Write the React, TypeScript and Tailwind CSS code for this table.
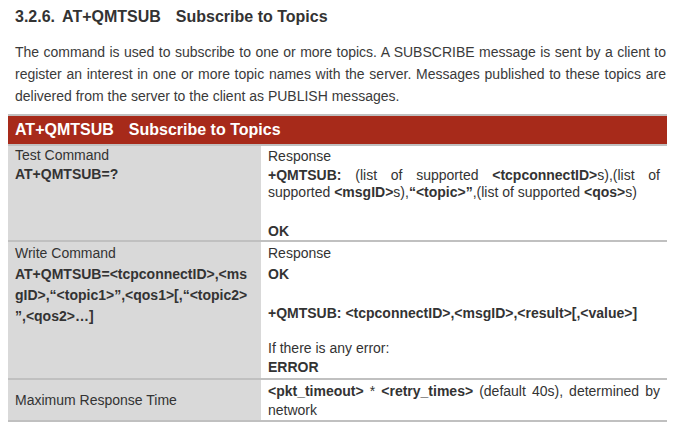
import React from "react";

const font = { fontFamily: '"Liberation Sans", Arial, sans-serif' };

export default function App() {
  return (
    <div className="w-[686px] h-[438px] bg-white text-[#333333] overflow-hidden" style={font}>
      {/* Title */}
      <div className="pt-[7px] pl-[15px] h-[27px] text-[16px] leading-[20px] font-bold text-[#333333] whitespace-nowrap">
        <span>3.2.6.</span>
        <span className="ml-[7px]">AT+QMTSUB</span>
        <span className="ml-[15px]">Subscribe to Topics</span>
      </div>
      {/* Paragraph */}
      <div className="mt-[14px] pl-[15px] pr-[20px] text-[14px] leading-[22px] text-[#3a3a3a]">
        <div className="text-justify [text-align-last:justify] whitespace-nowrap">
          The command is used to subscribe to one or more topics. A SUBSCRIBE message is sent by a client to
        </div>
        <div className="text-justify [text-align-last:justify] whitespace-nowrap">
          register an interest in one or more topic names with the server. Messages published to these topics are
        </div>
        <div className="whitespace-nowrap">delivered from the server to the client as PUBLISH messages.</div>
      </div>
      {/* Table */}
      <div className="mt-[7px] ml-[8px] w-[659px] text-[14px] text-[#333333]">
        <div className="h-[2px] bg-[#c0c0c0]" />
        <div className="h-[28px] bg-[#a72a1a] text-white font-bold text-[16px] leading-[28px] pl-[7px] whitespace-nowrap">
          <span>AT+QMTSUB</span>
          <span className="ml-[15px]">Subscribe to Topics</span>
        </div>
        <div className="h-[2px] bg-[#c0c0c0]" />
        {/* Row 1 */}
        <div className="flex h-[94px]">
          <div className="w-[253px] bg-[#d9d9d9] pl-[7px] leading-[19px]">
            <div>Test Command</div>
            <div className="font-bold">AT+QMTSUB=?</div>
          </div>
          <div className="flex-1 pl-[7px] pr-[7px] flex flex-col">
            <div className="h-[21px] leading-[21px]">Response</div>
            <div className="h-[17px] leading-[17px] text-justify [text-align-last:justify] whitespace-nowrap">
              <b>+QMTSUB:</b> (list of supported <b>&lt;tcpconnectID&gt;</b>s),(list of
            </div>
            <div className="h-[17px] leading-[17px] whitespace-nowrap">
              supported <b>&lt;msgID&gt;</b>s),<b>“&lt;topic&gt;”</b>,(list of supported <b>&lt;qos&gt;</b>s)
            </div>
            <div className="mt-[21px] h-[18px] leading-[18px] font-bold">OK</div>
          </div>
        </div>
        <div className="h-[2px] bg-[#c0c0c0]" />
        {/* Row 2 */}
        <div className="flex h-[136px]">
          <div className="w-[253px] bg-[#d9d9d9] pl-[7px] pt-[1px] leading-[21px] whitespace-nowrap">
            <div>Write Command</div>
            <div className="font-bold">AT+QMTSUB=&lt;tcpconnectID&gt;,&lt;ms</div>
            <div className="font-bold">gID&gt;,“&lt;topic1&gt;”,&lt;qos1&gt;[,“&lt;topic2&gt;</div>
            <div className="font-bold">”,&lt;qos2&gt;…]</div>
          </div>
          <div className="flex-1 pl-[7px] pr-[7px] pt-[1px] flex flex-col whitespace-nowrap">
            <div className="h-[21px] leading-[21px]">Response</div>
            <div className="h-[21px] leading-[21px] font-bold">OK</div>
            <div className="mt-[18px] h-[21px] leading-[21px] font-bold">
              +QMTSUB: &lt;tcpconnectID&gt;,&lt;msgID&gt;,&lt;result&gt;[,&lt;value&gt;]
            </div>
            <div className="mt-[15px] h-[18px] leading-[18px]">If there is any error:</div>
            <div className="h-[21px] leading-[21px] font-bold">ERROR</div>
          </div>
        </div>
        <div className="h-[2px] bg-[#c0c0c0]" />
        {/* Row 3 */}
        <div className="flex h-[40px]">
          <div className="w-[253px] bg-[#d9d9d9] pl-[7px] flex items-center">
            <span>Maximum Response Time</span>
          </div>
          <div className="flex-1 pl-[7px] pr-[7px] pt-[2px] leading-[19px]">
            <div className="text-justify [text-align-last:justify] whitespace-nowrap">
              <b>&lt;pkt_timeout&gt;</b> * <b>&lt;retry_times&gt;</b> (default 40s), determined by
            </div>
            <div>network</div>
          </div>
        </div>
        <div className="h-[2px] bg-[#c0c0c0]" />
      </div>
    </div>
  );
}
